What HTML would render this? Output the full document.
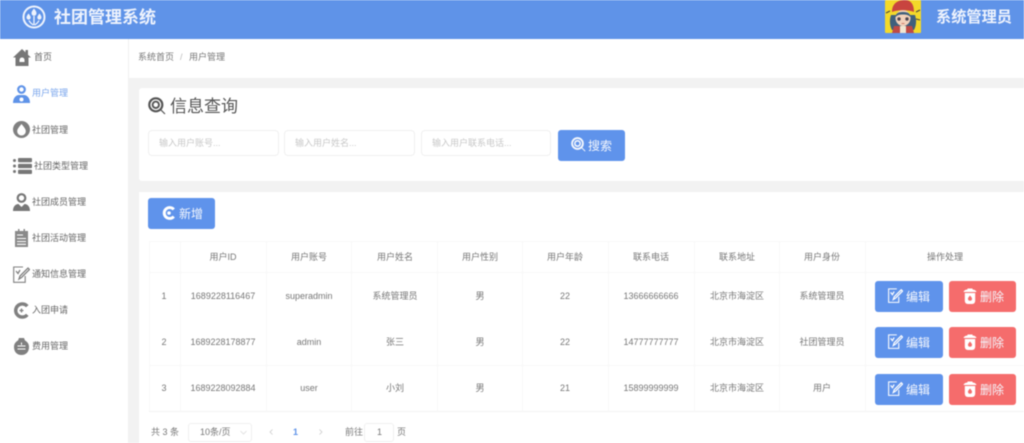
<!DOCTYPE html>
<html lang="zh"><head><meta charset="utf-8"><title>社团管理系统</title>
<style>
*{box-sizing:border-box}
html,body{margin:0;padding:0;width:1024px;height:443px;overflow:hidden;background:#fff}
body{font-family:"Liberation Sans","Noto Sans CJK SC",sans-serif;color:#666;position:relative}
#r{position:absolute;left:0;top:0;width:1024px;height:443px;overflow:hidden;filter:blur(.5px)}
.a{position:absolute}
.t{position:absolute;white-space:nowrap;line-height:1}
.c{position:absolute;white-space:nowrap;line-height:1;text-align:center;font-size:9px;color:#777;transform:translateX(-50%)}
.in{position:absolute;top:130px;height:26px;background:#fff;border:1px solid #f0f0f0;border-radius:4px;font-size:9px;color:#c8c8c8;line-height:24px;padding-left:10px}
.b{position:absolute;height:31px;border-radius:3px;color:#fff}
.bl{background:#5f93eb}.rd{background:#f56c6c}
.v{position:absolute;width:1px;background:#f8f8f8}
.h{position:absolute;height:1px;left:149px;width:875px;background:#f3f3f3}
.s{font-size:9px;color:#666}
.bt{font-size:12px;color:#f4f7fd}
</style></head><body><div id="r">
<svg width="0" height="0" style="position:absolute"><defs>
<symbol id="ed" viewBox="0 0 17 17"><path d="M10 1H.7v15.300h11.500V10" fill="none" stroke="#fff" stroke-width="1.200"/><path d="M3 5l2 2.500L7 4M6 13l1-3 8-8 1.500 1.500-8 8z" fill="none" stroke="#fff" stroke-width="1.400"/></symbol>
<symbol id="tr" viewBox="0 0 14 16"><path d="M.5 4c.5-2 3-2.500 4-2.500V.5h5v1c1 0 3.500.5 4 2.500z" fill="#fff"/><path d="M1.800 5h10.400v8a3 3 0 0 1-3 3H4.800a3 3 0 0 1-3-3z" fill="#fff"/><path d="M7 7.500c-1.300 1.500-2 2.300-2 3.200a2 2 0 0 0 4 0c0-.9-.7-1.700-2-3.200z" fill="#f56c6c"/></symbol>
<symbol id="se" viewBox="0 0 18 18"><circle cx="7.800" cy="7.800" r="6.500" fill="none" stroke="currentColor" stroke-width="2.200"/><circle cx="7.800" cy="7.800" r="3.200" fill="none" stroke="currentColor" stroke-width="1.900"/><path d="M12.800 12.800l4.200 4.200" stroke="currentColor" stroke-width="1.200"/></symbol>
</defs></svg>
<!-- header -->
<div class="a" style="left:0;top:0;width:1024px;height:39px;background:#5f93e8"></div>
<svg class="a" style="left:22px;top:5px" width="24" height="24" viewBox="0 0 24 24"><circle cx="12" cy="12" r="10.500" fill="none" stroke="#eef3fd" stroke-width="2"/><path d="M12 3.500c-1.800 2.200-2.500 3.500-2.500 4.800a2.500 2.500 0 0 0 5 0c0-1.300-.7-2.600-2.500-4.800zM6.500 8.500c-1.500 1.900-2 3-2 4a2.100 2.100 0 0 0 4.200 0c0-1-.7-2.100-2.200-4zM17.500 8.500c-1.500 1.900-2.200 3-2.200 4a2.100 2.100 0 0 0 4.200 0c0-1-.5-2.100-2-4z" fill="#eef3fd"/><path d="M12 11v9M7 15.500c1 2 2.500 3.500 4.500 4.500M17 15.500c-1 2-2.500 3.500-4.500 4.500" stroke="#eef3fd" stroke-width="1.300" fill="none"/></svg>
<div class="t" style="left:54px;top:9px;font-size:17px;font-weight:700;color:#eef3fd">社团管理系统</div>
<svg class="a" style="left:885px;top:0" width="36" height="33" viewBox="0 0 36 33"><rect width="36" height="33" rx="1" fill="#f3d92a"/><path d="M6 15c-2 6-1 11 1 15h22c2-4 3-9 1-15z" fill="#3f607c"/><path d="M9 26h18l2 7H7z" fill="#bf4a44"/><rect x="15" y="26" width="6" height="7" fill="#f1e7d2"/><ellipse cx="18" cy="18" rx="7.500" ry="8" fill="#f3d2bb"/><path d="M10.500 17c0-3 2-5 7.500-5s7.500 2 7.500 5c-2-2-4-2.500-7.500-2.500S12.500 15 10.500 17z" fill="#3f607c"/><path d="M7 12C7 4 12 0 20 0c7 0 9 6 9 12-6-2.500-16-2.500-22 0z" fill="#c8443f"/><circle cx="14" cy="19" r="1.700" fill="#4f4550"/><circle cx="22" cy="19" r="1.700" fill="#4f4550"/><path d="M16.500 23.500h3" stroke="#c96a5c" stroke-width=".8"/><path d="M1 13l4-2M31 12l4-2M31 19l4 1" stroke="#444" stroke-width="1"/></svg>
<div class="t" style="left:936px;top:10px;font-size:15.200px;font-weight:700;color:#eef3fd">系统管理员</div>

<!-- sidebar -->
<div class="a" style="left:128px;top:39px;width:1px;height:404px;background:#f0f0f0"></div>
<svg class="a" style="left:13px;top:49px" width="18" height="17" viewBox="0 0 18 17"><path d="M9 0L0 8.500h2.500V17h13V8.500H18L15 5.700V1h-2.500v2.400z" fill="#777"/><path d="M6.500 11a2.500 2.500 0 0 1 5 0v2h-5z" fill="#fff"/></svg>
<div class="t s" style="left:34px;top:53px">首页</div>
<svg class="a" style="left:13px;top:85px" width="17" height="18" viewBox="0 0 17 18"><circle cx="8.500" cy="4.500" r="3.300" fill="none" stroke="#5f93e8" stroke-width="2.200"/><path d="M0 18c0-5 3-8 6-8h5c3 0 6 3 6 8z" fill="#5f93e8"/><circle cx="8.500" cy="14.500" r="2" fill="#fff"/></svg>
<div class="t" style="left:32px;top:89px;font-size:9px;color:#78a4ec">用户管理</div>
<svg class="a" style="left:13px;top:121px" width="17" height="17" viewBox="0 0 17 17"><circle cx="8.500" cy="8.500" r="8.500" fill="#808080"/><path d="M8.500 3C6 6.200 4.200 8 4.200 10.200a4.300 4.300 0 0 0 8.600 0C12.800 8 11 6.200 8.500 3z" fill="#fff"/></svg>
<div class="t s" style="left:32px;top:126px">社团管理</div>
<svg class="a" style="left:13px;top:158px" width="19" height="16" viewBox="0 0 19 16"><g fill="#777"><circle cx="1.500" cy="2.500" r="1.500"/><circle cx="1.500" cy="8" r="1.500"/><circle cx="1.500" cy="13.500" r="1.500"/><rect x="5" y="0" width="14" height="4.200" rx="1"/><rect x="5" y="5.900" width="14" height="4.200" rx="1"/><rect x="5" y="11.800" width="14" height="4.200" rx="1"/></g></svg>
<div class="t s" style="left:34px;top:162px">社团类型管理</div>
<svg class="a" style="left:13px;top:193px" width="17" height="18" viewBox="0 0 17 18"><circle cx="8.500" cy="5" r="3.800" fill="none" stroke="#777" stroke-width="2.200"/><path d="M0 18c0-4.500 2.500-7 5.500-7l3 3 3-3c3 0 5.500 2.500 5.500 7z" fill="#777"/></svg>
<div class="t s" style="left:32px;top:198px">社团成员管理</div>
<svg class="a" style="left:15px;top:229px" width="13" height="18" viewBox="0 0 13 18"><path d="M0 2h3V0h1.500v2h4V0H10v2h3v16H0z" fill="#8a8a8a"/><path d="M2 6h6M2 9.500h9M2 12.500h9M2 15.300h9" stroke="#fff" stroke-width="1.100"/></svg>
<div class="t s" style="left:32px;top:234px">社团活动管理</div>
<svg class="a" style="left:13px;top:266px" width="17" height="17" viewBox="0 0 17 17"><path d="M10 1H.7v15.300h11.500V10" fill="none" stroke="#808080" stroke-width="1.100"/><path d="M3 5l2 2.500L7 4M6 13l1-3 8-8 1.500 1.500-8 8z" fill="none" stroke="#808080" stroke-width="1.300"/></svg>
<div class="t s" style="left:32px;top:270px">通知信息管理</div>
<svg class="a" style="left:13px;top:302px" width="17" height="17" viewBox="0 0 17 17"><path d="M14.300 4.200A6.600 6.600 0 1 0 14.300 12.800" fill="none" stroke="#808080" stroke-width="3.400"/><path d="M8.500 6.500v4M6.500 8.500h4" stroke="#808080" stroke-width="1.300"/></svg>
<div class="t s" style="left:32px;top:306px">入团申请</div>
<svg class="a" style="left:14px;top:338px" width="15" height="17" viewBox="0 0 15 17"><path d="M5 0h5l1 2.500c2 1 4 3 4 6.500 0 5-3 8-7.500 8S0 14 0 9c0-3.500 2-5.500 4-6.500z" fill="#808080"/><path d="M7.500 4.500v2.500M3.500 8h8M3.500 11h8" stroke="#fff" stroke-width="1"/></svg>
<div class="t s" style="left:32px;top:342px">费用管理</div>

<!-- main bg -->
<div class="a" style="left:129px;top:78px;width:895px;height:365px;background:#f2f2f2"></div>
<div class="t" style="left:138px;top:53px;font-size:9px;color:#777">系统首页</div>
<div class="t" style="left:180px;top:53px;font-size:9px;color:#bbb">/</div>
<div class="t" style="left:189px;top:53px;font-size:9px;color:#777">用户管理</div>

<!-- search card -->
<div class="a" style="left:139px;top:88px;width:885px;height:93px;background:#fff;border-radius:3px 0 0 3px"></div>
<svg class="a" style="left:148px;top:97px;color:#555" width="18" height="18"><use href="#se"/></svg>
<div class="t" style="left:170px;top:98px;font-size:17px;color:#555">信息查询</div>
<div class="in" style="left:148px;width:131px">输入用户账号...</div>
<div class="in" style="left:284px;width:131px">输入用户姓名...</div>
<div class="in" style="left:421px;width:130px">输入用户联系电话...</div>
<div class="b bl" style="left:558px;top:130px;width:67px"></div>
<svg class="a" style="left:571px;top:137px;color:#f4f7fd" width="15" height="15"><use href="#se"/></svg>
<div class="t bt" style="left:588px;top:140px">搜索</div>

<!-- table card -->
<div class="a" style="left:139px;top:192px;width:885px;height:251px;background:#fff"></div>
<div class="b bl" style="left:148px;top:198px;width:67px"></div>
<svg class="a" style="left:162px;top:206px" width="14" height="14" viewBox="0 0 17 17"><path d="M14.300 4.200A6.600 6.600 0 1 0 14.300 12.800" fill="none" stroke="#fff" stroke-width="3.600"/><circle cx="8.500" cy="8.500" r="2.200" fill="#fff"/></svg>
<div class="t bt" style="left:179px;top:208px">新增</div>

<div class="h" style="top:241px;background:#f8f8f8"></div>
<div class="h" style="top:272px;background:#f8f8f8"></div>
<div class="h" style="top:365px;background:#f8f8f8"></div>
<div class="h" style="top:411px"></div>
<div class="v" style="left:149px;top:241px;height:170px"></div>
<div class="v" style="left:180px;top:241px;height:170px"></div>
<div class="v" style="left:266px;top:241px;height:170px"></div>
<div class="v" style="left:351px;top:241px;height:170px"></div>
<div class="v" style="left:437px;top:241px;height:170px"></div>
<div class="v" style="left:522px;top:241px;height:170px"></div>
<div class="v" style="left:608px;top:241px;height:170px"></div>
<div class="v" style="left:694px;top:241px;height:170px"></div>
<div class="v" style="left:779px;top:241px;height:170px"></div>
<div class="v" style="left:865px;top:241px;height:170px"></div>

<div class="c" style="left:223px;top:253px">用户ID</div><div class="c" style="left:309px;top:253px">用户账号</div><div class="c" style="left:395px;top:253px">用户姓名</div><div class="c" style="left:480px;top:253px">用户性别</div><div class="c" style="left:565px;top:253px">用户年龄</div><div class="c" style="left:651px;top:253px">联系电话</div><div class="c" style="left:737px;top:253px">联系地址</div><div class="c" style="left:822px;top:253px">用户身份</div><div class="c" style="left:945px;top:253px">操作处理</div>

<div class="c" style="left:164px;top:292px">1</div><div class="c" style="left:223px;top:292px">1689228116467</div><div class="c" style="left:309px;top:292px">superadmin</div><div class="c" style="left:395px;top:292px">系统管理员</div><div class="c" style="left:480px;top:292px">男</div><div class="c" style="left:565px;top:292px">22</div><div class="c" style="left:651px;top:292px">13666666666</div><div class="c" style="left:737px;top:292px">北京市海淀区</div><div class="c" style="left:822px;top:292px">系统管理员</div>

<div class="c" style="left:164px;top:338px">2</div><div class="c" style="left:223px;top:338px">1689228178877</div><div class="c" style="left:309px;top:338px">admin</div><div class="c" style="left:395px;top:338px">张三</div><div class="c" style="left:480px;top:338px">男</div><div class="c" style="left:565px;top:338px">22</div><div class="c" style="left:651px;top:338px">14777777777</div><div class="c" style="left:737px;top:338px">北京市海淀区</div><div class="c" style="left:822px;top:338px">社团管理员</div>

<div class="c" style="left:164px;top:384px">3</div><div class="c" style="left:223px;top:384px">1689228092884</div><div class="c" style="left:309px;top:384px">user</div><div class="c" style="left:395px;top:384px">小刘</div><div class="c" style="left:480px;top:384px">男</div><div class="c" style="left:565px;top:384px">21</div><div class="c" style="left:651px;top:384px">15899999999</div><div class="c" style="left:737px;top:384px">北京市海淀区</div><div class="c" style="left:822px;top:384px">用户</div>

<!-- row buttons -->
<div class="b bl" style="left:875px;top:281px;width:68px"></div><div class="b rd" style="left:949px;top:281px;width:67px"></div>
<div class="b bl" style="left:875px;top:327px;width:68px"></div><div class="b rd" style="left:949px;top:327px;width:67px"></div>
<div class="b bl" style="left:875px;top:374px;width:68px"></div><div class="b rd" style="left:949px;top:374px;width:67px"></div>

<svg class="a" style="left:888px;top:288px" width="15" height="15"><use href="#ed"/></svg>
<div class="t bt" style="left:906px;top:291px">编辑</div>
<svg class="a" style="left:888px;top:334px" width="15" height="15"><use href="#ed"/></svg>
<div class="t bt" style="left:906px;top:337px">编辑</div>
<svg class="a" style="left:888px;top:381px" width="15" height="15"><use href="#ed"/></svg>
<div class="t bt" style="left:906px;top:384px">编辑</div>

<svg class="a" style="left:963px;top:288px" width="14" height="16"><use href="#tr"/></svg>
<div class="t bt" style="left:980px;top:291px">删除</div>
<svg class="a" style="left:963px;top:334px" width="14" height="16"><use href="#tr"/></svg>
<div class="t bt" style="left:980px;top:337px">删除</div>
<svg class="a" style="left:963px;top:381px" width="14" height="16"><use href="#tr"/></svg>
<div class="t bt" style="left:980px;top:384px">删除</div>

<!-- pagination -->
<div class="t" style="left:151px;top:428px;font-size:9px;color:#777">共 3 条</div>
<div class="a" style="left:188px;top:423px;width:64px;height:19px;border:1px solid #f0f0f0;border-radius:3px"></div>
<div class="t" style="left:200px;top:428px;font-size:9px;color:#777">10条/页</div>
<svg class="a" style="left:240px;top:430px" width="7" height="5" viewBox="0 0 7 5"><path d="M.5 1l3 3 3-3" fill="none" stroke="#ddd" stroke-width=".8"/></svg>
<svg class="a" style="left:269px;top:429px" width="4" height="6" viewBox="0 0 4 6"><path d="M3.500 .5L1 3l2.500 2.500" fill="none" stroke="#ccc" stroke-width=".8"/></svg>
<div class="t" style="left:293px;top:428px;font-size:9px;font-weight:700;color:#5f93e8">1</div>
<svg class="a" style="left:319px;top:429px" width="4" height="6" viewBox="0 0 4 6"><path d="M.5 .5L3 3 .5 5.500" fill="none" stroke="#ccc" stroke-width=".8"/></svg>
<div class="t" style="left:345px;top:428px;font-size:9px;color:#777">前往</div>
<div class="a" style="left:364px;top:423px;width:30px;height:19px;border:1px solid #f0f0f0;border-radius:3px"></div>
<div class="t" style="left:377px;top:428px;font-size:9px;color:#777">1</div>
<div class="t" style="left:397px;top:428px;font-size:9px;color:#777">页</div>
</div></body></html>
